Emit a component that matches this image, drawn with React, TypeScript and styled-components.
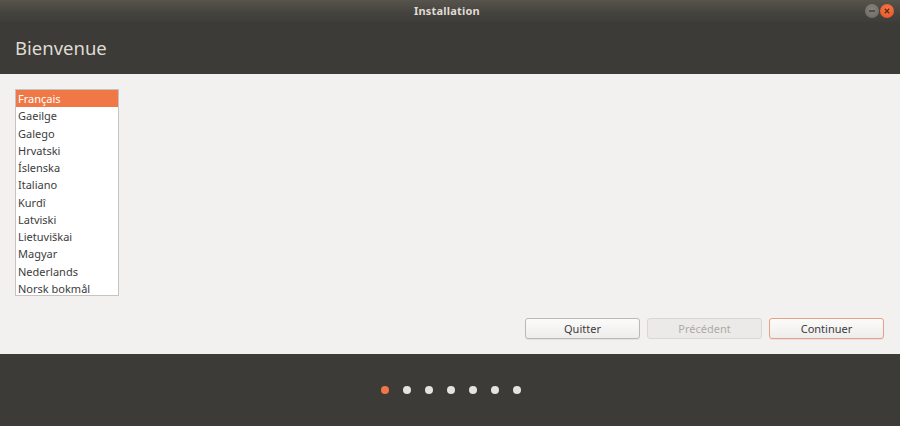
import React from "react";
import styled, { createGlobalStyle } from "styled-components";

const GlobalStyle = createGlobalStyle`
  * { box-sizing: border-box; }
  html, body { margin: 0; padding: 0; background: #3c3b37; }
  body { font-family: "Noto Sans", "DejaVu Sans", sans-serif; }
`;

const Window = styled.div`
  width: 900px;
  height: 426px;
  display: flex;
  flex-direction: column;
  background: #3c3b37;
  overflow: hidden;
`;

const TitleBar = styled.div`
  height: 22px;
  display: grid;
  grid-template-columns: 1fr auto 1fr;
  align-items: center;
  padding: 0 6px 1px 0;
  background: linear-gradient(#57544d, #45433e 60%, #3e3d39);
`;

const Title = styled.div`
  grid-column: 2;
  color: #dfdbd2;
  font-size: 11px;
  font-weight: bold;
  letter-spacing: 0.2px;
`;

const Controls = styled.div`
  justify-self: end;
  display: flex;
  gap: 1px;
`;

const WinButton = styled.div<{ $close?: boolean }>`
  width: 14px;
  height: 14px;
  border-radius: 50%;
  display: flex;
  align-items: center;
  justify-content: center;
  background: ${(p) =>
    p.$close
      ? "radial-gradient(circle at 50% 35%, #f6784a, #e4531f)"
      : "radial-gradient(circle at 50% 35%, #85827c, #6a6863)"};
`;

const Header = styled.div`
  height: 52px;
  padding: 14px 15px 0;
  background: #3c3b37;
`;

const Heading = styled.h1`
  margin: 0;
  color: #dfdbd2;
  font-size: 18.5px;
  font-weight: normal;
  line-height: 24px;
`;

const Content = styled.div`
  flex: 1;
  display: flex;
  flex-direction: column;
  justify-content: space-between;
  padding: 15px 16px 15px 15px;
  background: #f2f1f0;
`;

const LangList = styled.div`
  width: 104px;
  height: 207px;
  background: #fff;
  border: 1px solid #c7c4bf;
  overflow: hidden;
`;

const LangItem = styled.div<{ $selected?: boolean }>`
  height: 17.25px;
  line-height: 17px;
  padding-left: 2px;
  font-size: 11px;
  white-space: nowrap;
  color: ${(p) => (p.$selected ? "#fff" : "#3c3c3c")};
  background: ${(p) => (p.$selected ? "#f07746" : "transparent")};
`;

const ButtonRow = styled.div`
  display: flex;
  justify-content: flex-end;
  gap: 7px;
`;

const Button = styled.button<{ $variant?: "default" | "disabled" | "primary" }>`
  width: 115px;
  height: 21px;
  padding: 0;
  border-radius: 3px;
  font-family: inherit;
  font-size: 11px;
  color: ${(p) => (p.$variant === "disabled" ? "#aeaaa4" : "#3c3c3c")};
  border: 1px solid
    ${(p) => (p.$variant === "disabled" ? "#dad7d3" : p.$variant === "primary" ? "#e8a084" : "#bcb8b2")};
  background: ${(p) =>
    p.$variant === "disabled" ? "#ebeae8" : "linear-gradient(#fbfbfa, #eeedeb)"};
  box-shadow: ${(p) => (p.$variant === "disabled" ? "none" : "0 1px 0 rgba(0,0,0,0.06)")};
`;

const Footer = styled.div`
  height: 72px;
  display: flex;
  align-items: center;
  justify-content: center;
  gap: 14px;
  padding-left: 1px;
  background: #3c3b37;
`;

const Dot = styled.span<{ $active?: boolean }>`
  width: 8px;
  height: 8px;
  border-radius: 50%;
  background: ${(p) => (p.$active ? "#f07746" : "#e4e3e0")};
`;

const languages = [
  "Français",
  "Gaeilge",
  "Galego",
  "Hrvatski",
  "Íslenska",
  "Italiano",
  "Kurdî",
  "Latviski",
  "Lietuviškai",
  "Magyar",
  "Nederlands",
  "Norsk bokmål",
];

const App: React.FC = () => (
  <>
    <GlobalStyle />
    <Window>
      <TitleBar>
        <Title>Installation</Title>
        <Controls>
          <WinButton>
            <svg width="8" height="8" viewBox="0 0 8 8">
              <path d="M1 4h6" stroke="#3c3b37" strokeWidth="1.4" />
            </svg>
          </WinButton>
          <WinButton $close>
            <svg width="8" height="8" viewBox="0 0 8 8">
              <path d="M1.8 1.8l4.4 4.4M6.2 1.8L1.8 6.2" stroke="#5a2a17" strokeWidth="1.3" />
            </svg>
          </WinButton>
        </Controls>
      </TitleBar>
      <Header>
        <Heading>Bienvenue</Heading>
      </Header>
      <Content>
        <LangList>
          {languages.map((l, i) => (
            <LangItem key={l} $selected={i === 0}>
              {l}
            </LangItem>
          ))}
        </LangList>
        <ButtonRow>
          <Button>Quitter</Button>
          <Button $variant="disabled" disabled>
            Précédent
          </Button>
          <Button $variant="primary">Continuer</Button>
        </ButtonRow>
      </Content>
      <Footer>
        {[0, 1, 2, 3, 4, 5, 6].map((i) => (
          <Dot key={i} $active={i === 0} />
        ))}
      </Footer>
    </Window>
  </>
);

export default App;
